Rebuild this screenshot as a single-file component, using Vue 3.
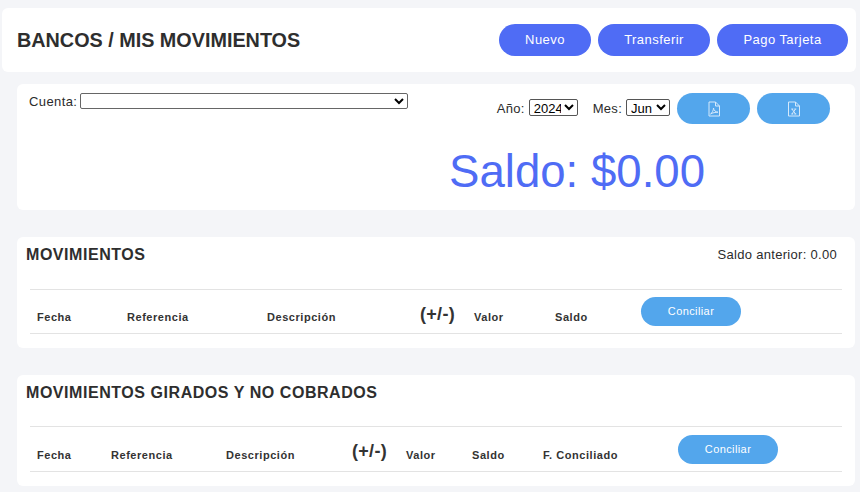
<template>
  <div class="page">
    <header class="top">
      <h1>BANCOS / MIS MOVIMIENTOS</h1>
      <div class="actions">
        <button class="btn nuevo">Nuevo</button>
        <button class="btn transferir">Transferir</button>
        <button class="btn pago">Pago Tarjeta</button>
      </div>
    </header>

    <section class="card filtros">
      <div class="filtros-row">
        <label class="cuenta">Cuenta: <select class="sel-cuenta"><option></option></select></label>
        <div class="periodo">
          <label>Año: <select class="sel-small sel-anio"><option>2024</option></select></label>
          <label class="mes">Mes: <select class="sel-small sel-mes"><option>Jun</option></select></label>
          <button class="btn-file" title="PDF">
            <svg width="14" height="16" viewBox="0 0 14 16" fill="none" stroke="#d5e9fb" stroke-width="1">
              <path d="M2 1h6.500L12.500 5v10h-10.500z" />
              <path d="M8.500 1v4h4" />
              <path d="M3.500 13c1.500-.8 3-3.500 3-6 .3 2.500 2 4 4.500 4.200-2.500 0-5.500.6-7.500 1.800z" />
            </svg>
          </button>
          <button class="btn-file" title="Excel">
            <svg width="14" height="16" viewBox="0 0 14 16" fill="none" stroke="#d5e9fb" stroke-width="1">
              <path d="M1.500 1h7l4 4v10h-11z" />
              <path d="M8.500 1v4h4" />
              <path d="M5 8l3.500 5M8.500 8L5 13M4.300 8h2M7.300 8h2M4.300 13h2M7.300 13h2" />
            </svg>
          </button>
        </div>
      </div>
      <div class="saldo">Saldo: $0.00</div>
    </section>

    <section class="card tabla">
      <div class="tabla-head">
        <h2>MOVIMIENTOS</h2>
        <span class="anterior">Saldo anterior: 0.00</span>
      </div>
      <div class="row row-mov">
        <span v-for="col in columnas" :key="col" :class="{ signo: col === '(+/-)' }">{{ col }}</span>
        <button class="btn-conciliar">Conciliar</button>
      </div>
    </section>

    <section class="card tabla">
      <div class="tabla-head">
        <h2>MOVIMIENTOS GIRADOS Y NO COBRADOS</h2>
      </div>
      <div class="row row-gir">
        <span v-for="col in columnasGirados" :key="col" :class="{ signo: col === '(+/-)' }">{{ col }}</span>
        <button class="btn-conciliar">Conciliar</button>
      </div>
    </section>
  </div>
</template>

<script setup>
const columnas = ['Fecha', 'Referencia', 'Descripción', '(+/-)', 'Valor', 'Saldo']
const columnasGirados = [...columnas, 'F. Conciliado']
</script>

<style>
html, body {
  margin: 0;
  background: #f4f5f8;
}
</style>

<style scoped>
.page {
  width: 860px;
  height: 492px;
  overflow: hidden;
  box-sizing: border-box;
  padding-top: 8px;
  font-family: "Liberation Sans", Arial, sans-serif;
  color: #2b2b2b;
  background: #f4f5f8;
}

.top {
  display: flex;
  justify-content: space-between;
  align-items: center;
  height: 64px;
  margin: 0 4px 0 2px;
  padding: 0 8px 0 15px;
  background: #fff;
  border-radius: 6px;
}

h1 {
  margin: 0;
  font-size: 19.800px;
  font-weight: 700;
  color: #2e2e2e;
}

.actions {
  display: flex;
  gap: 7px;
}

.btn {
  height: 32px;
  border: none;
  border-radius: 16px;
  background: #4f6cf5;
  color: #fff;
  font: 13px "Liberation Sans", Arial, sans-serif;
  letter-spacing: 0.45px;
  padding: 0 0 2px;
}

.nuevo { width: 92px; }
.transferir { width: 112px; }
.pago { width: 131px; }

.card {
  margin-left: 17px;
  margin-right: 5px;
  background: #fff;
  border-radius: 6px;
}

.filtros {
  margin-top: 12px;
  height: 126px;
  box-sizing: border-box;
  padding: 9px 25px 0 12px;
}

.filtros-row {
  display: flex;
  justify-content: space-between;
  align-items: flex-start;
  font-size: 13px;
  letter-spacing: 0.4px;
}

.cuenta {
  display: flex;
  align-items: center;
  gap: 3px;
  height: 16px;
}

.sel-cuenta {
  width: 328px;
  height: 16px;
  padding: 0;
  font-size: 12px;
  background: #fff;
  border: 1px solid #666;
  border-radius: 2px;
}

.periodo {
  display: flex;
  align-items: center;
  gap: 7px;
  letter-spacing: 0.3px;
}

.periodo label {
  white-space: nowrap;
  margin-bottom: 2px;
}

.mes {
  margin-left: 8px;
}

.sel-small {
  height: 17px;
  padding: 0;
  font: 13px "Liberation Sans", Arial, sans-serif;
  background: #fff;
  color: #000;
  border: 1px solid #555;
  border-radius: 2px;
}

.sel-anio { width: 49px; }
.sel-mes { width: 44px; }

.btn-file {
  display: flex;
  align-items: center;
  justify-content: center;
  width: 73px;
  height: 31px;
  padding: 0;
  border: none;
  border-radius: 16px;
  background: #53a6ec;
}

.saldo {
  margin: 22px 0 0 420px;
  font-size: 45.600px;
  line-height: 52px;
  color: #4f6cf5;
}

.tabla {
  margin-top: 27px;
  height: 111px;
  box-sizing: border-box;
  padding: 0 13px;
}

.tabla-head {
  display: flex;
  justify-content: space-between;
  align-items: center;
  height: 35px;
  margin-left: -4px;
  margin-right: 5px;
}

h2 {
  margin: 0;
  font-size: 16px;
  font-weight: 700;
  letter-spacing: 0.55px;
  color: #2e2e2e;
}

.anterior {
  font-size: 13px;
  letter-spacing: 0.3px;
}

.row {
  display: grid;
  align-items: center;
  margin-top: 17px;
  padding-left: 7px;
  border-top: 1px solid #e3e3e3;
  border-bottom: 1px solid #e3e3e3;
  font-size: 11px;
  font-weight: 700;
  letter-spacing: 0.55px;
  color: #333;
}

.row-mov {
  height: 43px;
  grid-template-columns: 90px 140px 153px 54px 81px 86px 1fr;
}

.row-gir {
  height: 44px;
  margin-top: 16px;
  grid-template-columns: 74px 115px 126px 54px 66px 71px 135px 1fr;
}

.row span {
  padding-top: 11px;
}

.row .signo {
  padding: 5px 0 0;
  font-size: 18px;
  letter-spacing: 0.3px;
}

.btn-conciliar {
  width: 100px;
  height: 29px;
  padding: 0 0 1px;
  border: none;
  border-radius: 15px;
  background: #53a6ec;
  color: #fff;
  font: 11px "Liberation Sans", Arial, sans-serif;
  letter-spacing: 0.4px;
}
</style>
